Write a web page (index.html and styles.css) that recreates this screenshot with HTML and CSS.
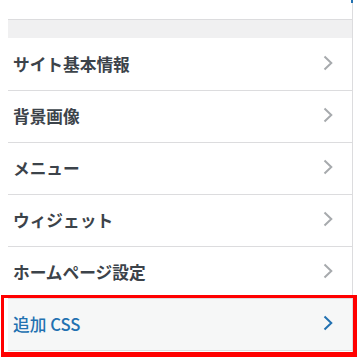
FILE: index.html
```html
<!DOCTYPE html>
<html lang="ja">
<head>
<meta charset="utf-8">
<link rel="stylesheet" href="styles.css">
</head>
<body>
<div class="panel">
  <div class="top-space"></div>
  <div class="band"></div>
  <ul class="list">
    <li class="row"><span class="label">サイト基本情報</span><svg class="chev" viewBox="0 0 10 16" width="10" height="16"><path d="M1.5 1.5 L8.3 8 L1.5 14.5" fill="none" stroke="currentColor" stroke-width="2"/></svg></li>
    <li class="row"><span class="label">背景画像</span><svg class="chev" viewBox="0 0 10 16" width="10" height="16"><path d="M1.5 1.5 L8.3 8 L1.5 14.5" fill="none" stroke="currentColor" stroke-width="2"/></svg></li>
    <li class="row"><span class="label">メニュー</span><svg class="chev" viewBox="0 0 10 16" width="10" height="16"><path d="M1.5 1.5 L8.3 8 L1.5 14.5" fill="none" stroke="currentColor" stroke-width="2"/></svg></li>
    <li class="row"><span class="label">ウィジェット</span><svg class="chev" viewBox="0 0 10 16" width="10" height="16"><path d="M1.5 1.5 L8.3 8 L1.5 14.5" fill="none" stroke="currentColor" stroke-width="2"/></svg></li>
    <li class="row"><span class="label">ホームページ設定</span><svg class="chev" viewBox="0 0 10 16" width="10" height="16"><path d="M1.5 1.5 L8.3 8 L1.5 14.5" fill="none" stroke="currentColor" stroke-width="2"/></svg></li>
    <li class="row active"><span class="label">追加 CSS</span><svg class="chev" viewBox="0 0 10 16" width="10" height="16"><path d="M1.5 1.5 L8.3 8 L1.5 14.5" fill="none" stroke="currentColor" stroke-width="2"/></svg></li>
  </ul>
</div>
<div class="highlight"></div>
</body>
</html>
```
FILE: styles.css
```css
html, body {
  margin: 0;
  padding: 0;
  background: #fff;
  height: 100%;
  overflow: hidden;
}
body {
  position: relative;
  font-family: "Noto Sans CJK JP", "Noto Sans", sans-serif;
}
.panel {
  margin-left: 8px;
  width: 344px;
  height: 100%;
  border-right: 1px solid #dcdcde;
  position: relative;
}
.panel::before {
  content: "";
  position: absolute;
  right: -1px;
  top: 0;
  width: 2px;
  height: 3px;
  background: #2271b1;
}
.top-space {
  height: 19px;
}
.band {
  height: 18px;
  border-top: 1px solid #dcdcde;
  background: #f0f0f1;
}
.list {
  list-style: none;
  margin: 0;
  padding: 0;
}
.row {
  height: 51px;
  border-bottom: 1px solid #dcdcde;
  display: flex;
  align-items: center;
  justify-content: space-between;
  padding: 0 19px 0 5px;
  color: #3c434a;
}
.row:first-child {
  height: 52px;
}
.label {
  font-size: 16.7px;
  font-weight: 700;
  line-height: 1;
}
.chev {
  color: #a7aaad;
  display: block;
  margin-top: -3px;
}
.row.active {
  background: #f6f7f7;
  color: #2271b1;
}
.row.active .label {
  font-weight: 500;
}
.row.active .chev {
  color: #2271b1;
}
.highlight {
  position: absolute;
  left: 1px;
  top: 295px;
  width: 356px;
  height: 62px;
  border: 3px solid #ff0000;
  box-sizing: border-box;
  border-bottom-width: 5px;
  border-right-width: 4px;
}
```
